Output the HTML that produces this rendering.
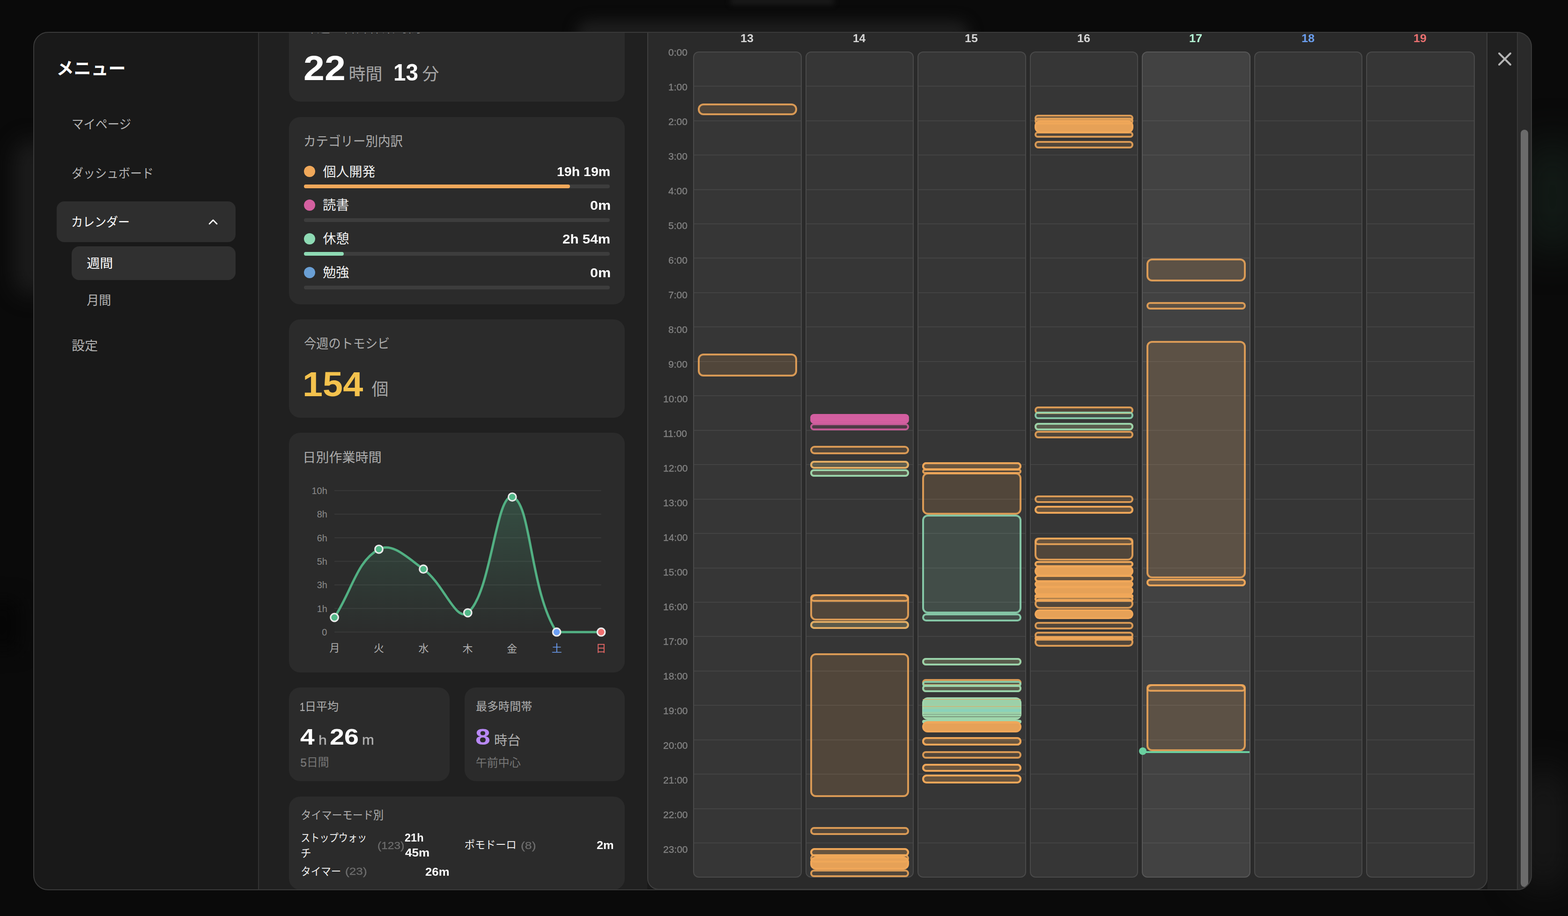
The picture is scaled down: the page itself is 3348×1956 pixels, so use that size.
<!DOCTYPE html>
<html lang="ja"><head><meta charset="utf-8"><title>Weekly calendar</title>
<style>
*{box-sizing:border-box;margin:0;padding:0}
html,body{width:3348px;height:1956px;overflow:hidden;background:#0a0a0a}
body{position:relative;font-family:"Liberation Sans",sans-serif}
.b,.t,.jp,.e{position:absolute}
.t{line-height:1;white-space:nowrap;transform-origin:0 0;display:block}
.jp{display:block;overflow:visible}
.jp text{font-family:"Liberation Sans","Noto Sans CJK JP",sans-serif}
.e{border-style:solid;border-width:4px;border-radius:12px}
#modal{position:absolute;left:71px;top:68px;width:3200px;height:1833px;border-radius:32px;overflow:hidden;background:#191919}
#modal>.in{position:absolute;left:-71px;top:-68px;width:3348px;height:1956px}
#frame{position:absolute;left:71px;top:68px;width:3200px;height:1833px;border-radius:32px;border:2px solid #3a3a3a;pointer-events:none}
.card{position:absolute;background:#2b2b2b;border-radius:24px}
.col{position:absolute;top:110px;width:231.5px;height:1764px;border:2px solid #4a4a4a;border-radius:12px;background:#363636}
.col.today{background:#424242;border-color:#585858}
.hl{position:absolute;left:0;right:0;height:2px;background:#434343}
.today .hl{background:#4e4e4e}
</style></head><body>

<div class="b" style="left:1230px;top:44px;width:840px;height:60px;background:#1d1d1d;filter:blur(14px);border-radius:30px"></div>
<div class="b" style="left:1560px;top:-6px;width:220px;height:16px;background:#1a1a1a;filter:blur(6px)"></div>
<div class="b" style="left:30px;top:300px;width:80px;height:330px;background:#1b1b1b;filter:blur(22px);border-radius:40px"></div>
<div class="b" style="left:-30px;top:1280px;width:70px;height:110px;background:#050505;filter:blur(20px)"></div>
<div class="b" style="left:3250px;top:300px;width:130px;height:240px;background:#121a16;filter:blur(40px);border-radius:60px"></div>
<div class="b" style="left:3240px;top:1640px;width:110px;height:260px;background:#181818;filter:blur(36px);border-radius:60px"></div>
<div id="modal"><div class="in">
<div class="b" style="left:553px;top:60px;width:829px;height:1850px;background:#202020"></div>
<div class="b" style="left:551px;top:60px;width:2px;height:1850px;background:#323232"></div>
<div class="b" style="left:3176px;top:60px;width:64px;height:1850px;background:#202020"></div>
<div class="b" style="left:3239px;top:60px;width:40px;height:1850px;background:#2a2a2a;border-left:2px solid #383838"></div>
<div class="b" style="left:3247px;top:277px;width:16px;height:1617px;background:#6b6b6b;border-radius:8px"></div>
<svg class="jp" style="left:119.7px;top:126.6px;" width="149.3" height="37.5" viewBox="-0.4 -33.5 149.3 37.5"><text x="0" y="0" font-size="37" font-weight="700" fill="#ffffff" textLength="148" lengthAdjust="spacingAndGlyphs">メニュー</text></svg>
<svg class="jp" style="left:151.5px;top:250.7px;" width="129.2" height="28" viewBox="-0.9 -24.5 129.2 28"><text x="0" y="0" font-size="27" fill="#b4b4b4" textLength="127" lengthAdjust="spacingAndGlyphs">マイページ</text></svg>
<svg class="jp" style="left:151.5px;top:353.7px;" width="176.9" height="30.3" viewBox="-1 -25.9 176.9 30.3"><text x="0" y="0" font-size="27" fill="#b4b4b4" textLength="175" lengthAdjust="spacingAndGlyphs">ダッシュボード</text></svg>
<div class="b" style="left:121px;top:430px;width:382px;height:87px;background:#2e2e2e;border-radius:16px"></div>
<svg class="jp" style="left:152px;top:457.5px;" width="126" height="30.1" viewBox="0.1 -25.9 126 30.1"><text x="0" y="0" font-size="27" fill="#ffffff" textLength="125" lengthAdjust="spacingAndGlyphs">カレンダー</text></svg>
<svg class="jp" style="left:441px;top:462px" width="28" height="24" viewBox="0 0 28 24"><path d="M6.1 16 L14.05 8.05 L22 16" fill="none" stroke="#ffffff" stroke-width="2.8" stroke-linecap="round" stroke-linejoin="round"/></svg>
<div class="b" style="left:153px;top:526px;width:350px;height:72px;background:#303030;border-radius:16px"></div>
<svg class="jp" style="left:183.5px;top:546.8px;" width="57.6" height="29.4" viewBox="-1.2 -25 57.6 29.4"><text x="0" y="0" font-size="27" fill="#ffffff" textLength="56" lengthAdjust="spacingAndGlyphs">週間</text></svg>
<svg class="jp" style="left:184px;top:627.1px;" width="54.3" height="28.9" viewBox="-1.3 -24.5 54.3 28.9"><text x="0" y="0" font-size="27" fill="#b4b4b4" textLength="52" lengthAdjust="spacingAndGlyphs">月間</text></svg>
<svg class="jp" style="left:152px;top:721.6px;" width="57.7" height="30.1" viewBox="-1 -25.6 57.7 30.1"><text x="0" y="0" font-size="27.5" fill="#b4b4b4" textLength="56" lengthAdjust="spacingAndGlyphs">設定</text></svg>
<div class="card" style="left:617px;top:10px;width:717px;height:207px"></div>
<svg class="jp" style="left:648px;top:42.8px;" width="251.9" height="30.2" viewBox="-1.2 -25.8 251.9 30.2"><text x="0" y="0" font-size="28" fill="#a8a8a8" textLength="250" lengthAdjust="spacingAndGlyphs">今週の合計作業時間</text></svg>
<span class="t " style="left:648.2px;top:108.8px;font-size:73.5px;color:#ffffff;font-weight:700;transform:scaleX(1.098);">22</span>
<svg class="jp" style="left:744.7px;top:138.8px;" width="72.3" height="37.5" viewBox="0.5 -32.4 72.3 37.5"><text x="0" y="0" font-size="36" fill="#a6a6a6" textLength="72" lengthAdjust="spacingAndGlyphs">時間</text></svg>
<span class="t " style="left:839.5px;top:129.6px;font-size:50.5px;color:#ffffff;font-weight:700;transform:scaleX(0.944);">13</span>
<svg class="jp" style="left:899.7px;top:139.3px;" width="38.7" height="37.1" viewBox="-1.4 -31.8 38.7 37.1"><text x="0" y="0" font-size="36" fill="#a6a6a6">分</text></svg>
<div class="card" style="left:617px;top:250px;width:717px;height:400px"></div>
<svg class="jp" style="left:648px;top:285.6px;" width="213.5" height="30.5" viewBox="0.1 -26.1 213.5 30.5"><text x="0" y="0" font-size="28" fill="#adadad" textLength="212" lengthAdjust="spacingAndGlyphs">カテゴリー別内訳</text></svg>
<div class="b" style="left:649px;top:354px;width:24px;height:24px;background:#f0a85a;border-radius:50%"></div>
<svg class="jp" style="left:687.5px;top:350.5px;" width="115" height="30.1" viewBox="-1.6 -25.6 115 30.1"><text x="0" y="0" font-size="28" fill="#f2f2f2" textLength="112" lengthAdjust="spacingAndGlyphs">個人開発</text></svg>
<span class="t " style="left:1189.2px;top:352.6px;font-size:27.4px;color:#ffffff;font-weight:700;transform:scaleX(1.042);">19h 19m</span>
<div class="b" style="left:649px;top:394px;width:653px;height:8px;background:#3d3d3d;border-radius:4px"></div>
<div class="b" style="left:649px;top:394px;width:568px;height:8px;background:#f0a85a;border-radius:4px"></div>
<div class="b" style="left:649px;top:426px;width:24px;height:24px;background:#d460a0;border-radius:50%"></div>
<svg class="jp" style="left:687.5px;top:422.4px;" width="58.5" height="30.2" viewBox="-1 -25.7 58.5 30.2"><text x="0" y="0" font-size="28" fill="#f2f2f2" textLength="56.5" lengthAdjust="spacingAndGlyphs">読書</text></svg>
<span class="t " style="left:1259.5px;top:424.6px;font-size:27.4px;color:#ffffff;font-weight:700;transform:scaleX(1.114);">0m</span>
<div class="b" style="left:649px;top:466px;width:653px;height:8px;background:#3d3d3d;border-radius:4px"></div>
<div class="b" style="left:649px;top:498px;width:24px;height:24px;background:#8edab4;border-radius:50%"></div>
<svg class="jp" style="left:687.5px;top:494.4px;" width="58.5" height="30.2" viewBox="-1.6 -25.8 58.5 30.2"><text x="0" y="0" font-size="28" fill="#f2f2f2" textLength="56" lengthAdjust="spacingAndGlyphs">休憩</text></svg>
<span class="t " style="left:1201.4px;top:496.6px;font-size:27.4px;color:#ffffff;font-weight:700;transform:scaleX(1.082);">2h 54m</span>
<div class="b" style="left:649px;top:538px;width:653px;height:8px;background:#3d3d3d;border-radius:4px"></div>
<div class="b" style="left:649px;top:538px;width:85px;height:8px;background:#8edab4;border-radius:4px"></div>
<div class="b" style="left:649px;top:570px;width:24px;height:24px;background:#6a9fd4;border-radius:50%"></div>
<svg class="jp" style="left:687.5px;top:566.4px;" width="58.5" height="30.3" viewBox="-1.3 -25.7 58.5 30.3"><text x="0" y="0" font-size="28" fill="#f2f2f2" textLength="56" lengthAdjust="spacingAndGlyphs">勉強</text></svg>
<span class="t " style="left:1259.5px;top:568.6px;font-size:27.4px;color:#ffffff;font-weight:700;transform:scaleX(1.114);">0m</span>
<div class="b" style="left:649px;top:610px;width:653px;height:8px;background:#3d3d3d;border-radius:4px"></div>
<div class="card" style="left:617px;top:682px;width:717px;height:210px"></div>
<svg class="jp" style="left:648px;top:718.2px;" width="184.7" height="30.2" viewBox="-1.2 -25.8 184.7 30.2"><text x="0" y="0" font-size="28" fill="#adadad" textLength="183" lengthAdjust="spacingAndGlyphs">今週のトモシビ</text></svg>
<span class="t " style="left:646.1px;top:783.8px;font-size:74.5px;color:#f4c24d;font-weight:700;transform:scaleX(1.040);">154</span>
<svg class="jp" style="left:792.2px;top:812.1px;" width="37.1" height="37.3" viewBox="-1.5 -32.2 37.1 37.3"><text x="0" y="0" font-size="36" fill="#a6a6a6">個</text></svg>
<div class="card" style="left:617px;top:924px;width:717px;height:512px"></div>
<svg class="jp" style="left:648.6px;top:960.5px;" width="166.4" height="30.1" viewBox="2.7 -25.7 166.4 30.1"><text x="0" y="0" font-size="28" fill="#adadad" textLength="168.5" lengthAdjust="spacingAndGlyphs">日別作業時間</text></svg>
<svg class="jp" style="left:0;top:0" width="3348" height="1956" viewBox="0 0 3348 1956"><defs><linearGradient id="ga" x1="0" y1="1047.6" x2="0" y2="1349.7" gradientUnits="userSpaceOnUse"><stop offset="0" stop-color="#52b788" stop-opacity="0.26"/><stop offset="1" stop-color="#52b788" stop-opacity="0.01"/></linearGradient></defs><rect x="714.1" y="1046.6" width="569.5" height="2" fill="#393939"/><rect x="714.1" y="1096.9" width="569.5" height="2" fill="#393939"/><rect x="714.1" y="1147.3" width="569.5" height="2" fill="#393939"/><rect x="714.1" y="1197.7" width="569.5" height="2" fill="#393939"/><rect x="714.1" y="1248" width="569.5" height="2" fill="#393939"/><rect x="714.1" y="1298.3" width="569.5" height="2" fill="#393939"/><rect x="714.1" y="1348.7" width="569.5" height="2" fill="#393939"/><path d="M714.1 1318.5 C752.1 1260.2 761.5 1198.7 809 1172.8 C837.4 1157.3 870.7 1191.4 904 1215.2 C946.6 1245.7 973.4 1329.2 998.8 1308.6 C1049.3 1267.6 1058.4 1053.6 1093.8 1061.3 C1134.3 1070.1 1130.8 1261.8 1188.6 1349.7 C1206.7 1349.7 1245.6 1349.7 1283.6 1349.7 L1283.6 1349.7 L714.1 1349.7 Z" fill="url(#ga)"/><path d="M714.1 1318.5 C752.1 1260.2 761.5 1198.7 809 1172.8 C837.4 1157.3 870.7 1191.4 904 1215.2 C946.6 1245.7 973.4 1329.2 998.8 1308.6 C1049.3 1267.6 1058.4 1053.6 1093.8 1061.3 C1134.3 1070.1 1130.8 1261.8 1188.6 1349.7 C1206.7 1349.7 1245.6 1349.7 1283.6 1349.7" fill="none" stroke="#52b083" stroke-width="5" stroke-linecap="round" stroke-linejoin="round"/><circle cx="714.1" cy="1318.5" r="8.3" fill="#52b788" stroke="#ebebeb" stroke-width="3.2"/><circle cx="809" cy="1172.8" r="8.3" fill="#52b788" stroke="#ebebeb" stroke-width="3.2"/><circle cx="904" cy="1215.2" r="8.3" fill="#52b788" stroke="#ebebeb" stroke-width="3.2"/><circle cx="998.8" cy="1308.6" r="8.3" fill="#52b788" stroke="#ebebeb" stroke-width="3.2"/><circle cx="1093.8" cy="1061.3" r="8.3" fill="#52b788" stroke="#ebebeb" stroke-width="3.2"/><circle cx="1188.6" cy="1349.7" r="8.3" fill="#6b9ff5" stroke="#ebebeb" stroke-width="3.2"/><circle cx="1283.6" cy="1349.7" r="8.3" fill="#f07070" stroke="#ebebeb" stroke-width="3.2"/></svg>
<span class="t " style="left:665.5px;top:1037.8px;font-size:20px;color:#8a8a8a;">10h</span>
<span class="t " style="left:676.7px;top:1088.1px;font-size:20px;color:#8a8a8a;">8h</span>
<span class="t " style="left:676.7px;top:1138.5px;font-size:20px;color:#8a8a8a;">6h</span>
<span class="t " style="left:676.7px;top:1188.9px;font-size:20px;color:#8a8a8a;">5h</span>
<span class="t " style="left:676.7px;top:1239.2px;font-size:20px;color:#8a8a8a;">3h</span>
<span class="t " style="left:676.7px;top:1289.5px;font-size:20px;color:#8a8a8a;">1h</span>
<span class="t " style="left:687.3px;top:1339.9px;font-size:20px;color:#8a8a8a;">0</span>
<svg class="jp" style="left:703.3px;top:1372.3px;" width="21.7" height="23.3" viewBox="-1.4 -19.5 21.7 23.3"><text x="-1" y="0" font-size="22" fill="#b0b0b0">月</text></svg>
<svg class="jp" style="left:796.9px;top:1371.9px;" width="24.2" height="24.1" viewBox="-1.1 -20.3 24.2 24.1"><text x="0" y="0" font-size="22" fill="#b0b0b0">火</text></svg>
<svg class="jp" style="left:891.5px;top:1371.8px;" width="24.9" height="24.4" viewBox="-1.5 -20.5 24.9 24.4"><text x="0" y="0" font-size="22" fill="#b0b0b0">水</text></svg>
<svg class="jp" style="left:986.3px;top:1371.8px;" width="25" height="24.4" viewBox="-1.5 -20.6 25 24.4"><text x="0" y="0" font-size="22" fill="#b0b0b0">木</text></svg>
<svg class="jp" style="left:1081.4px;top:1372.1px;" width="24.7" height="23.8" viewBox="-1.3 -20.6 24.7 23.8"><text x="0" y="0" font-size="22" fill="#b0b0b0">金</text></svg>
<svg class="jp" style="left:1176.7px;top:1372.3px;" width="23.9" height="23.4" viewBox="-0.9 -20.5 23.9 23.4"><text x="0" y="0" font-size="22" fill="#6b9be8">土</text></svg>
<svg class="jp" style="left:1274.2px;top:1372.6px;" width="18.8" height="22.8" viewBox="1.7 -19.2 18.8 22.8"><text x="0" y="0" font-size="22" fill="#e06868">日</text></svg>
<div class="card" style="left:617px;top:1468px;width:343px;height:200px"></div>
<div class="card" style="left:992px;top:1468px;width:342px;height:200px"></div>
<span class="t " style="left:640.1px;top:1497.7px;font-size:24px;color:#b0b0b0;-webkit-text-stroke:0.4px #b0b0b0;transform:scaleX(0.850);">1</span>
<svg class="jp" style="left:652.5px;top:1495.2px;" width="70.3" height="26.3" viewBox="2 -22.3 70.3 26.3"><text x="0" y="0" font-size="24" fill="#b0b0b0" textLength="72" lengthAdjust="spacingAndGlyphs">日平均</text></svg>
<span class="t " style="left:640.9px;top:1550px;font-size:48px;color:#ffffff;font-weight:700;transform:scaleX(1.147);">4</span>
<span class="t " style="left:679.5px;top:1566px;font-size:28.5px;color:#b0b0b0;-webkit-text-stroke:0.5px #b0b0b0;transform:scaleX(1.131);">h</span>
<span class="t " style="left:704.1px;top:1550px;font-size:48px;color:#ffffff;font-weight:700;transform:scaleX(1.160);">26</span>
<span class="t " style="left:772.9px;top:1565px;font-size:29.5px;color:#b0b0b0;-webkit-text-stroke:0.5px #b0b0b0;transform:scaleX(1.050);">m</span>
<span class="t " style="left:641.2px;top:1617.3px;font-size:24.5px;color:#777777;-webkit-text-stroke:0.4px #777777;">5</span>
<svg class="jp" style="left:656.7px;top:1615.2px;" width="45.6" height="25.3" viewBox="2 -21.3 45.6 25.3"><text x="0" y="0" font-size="24" fill="#777777" textLength="47.5" lengthAdjust="spacingAndGlyphs">日間</text></svg>
<svg class="jp" style="left:1014.7px;top:1495.3px;" width="122.3" height="26.4" viewBox="-0.9 -22.3 122.3 26.4"><text x="0" y="0" font-size="24" fill="#b0b0b0" textLength="120.5" lengthAdjust="spacingAndGlyphs">最多時間帯</text></svg>
<span class="t " style="left:1015.2px;top:1549.2px;font-size:48.5px;color:#b888f6;font-weight:700;transform:scaleX(1.182);">8</span>
<svg class="jp" style="left:1054.7px;top:1564.9px;" width="57.3" height="30.2" viewBox="0 -25.8 57.3 30.2"><text x="0" y="0" font-size="28" fill="#b0b0b0" textLength="56.5" lengthAdjust="spacingAndGlyphs">時台</text></svg>
<svg class="jp" style="left:1014.7px;top:1614.8px;" width="97.3" height="26.4" viewBox="-0.8 -22.4 97.3 26.4"><text x="0" y="0" font-size="24" fill="#777777" textLength="96" lengthAdjust="spacingAndGlyphs">午前中心</text></svg>
<div class="card" style="left:617px;top:1701px;width:717px;height:198.5px"></div>
<svg class="jp" style="left:640.5px;top:1726.8px;" width="179" height="25.9" viewBox="-1.2 -21.8 179 25.9"><text x="0" y="0" font-size="24" fill="#b0b0b0" textLength="177" lengthAdjust="spacingAndGlyphs">タイマーモード別</text></svg>
<svg class="jp" style="left:640.5px;top:1774.8px;" width="143.2" height="26.2" viewBox="-1.1 -22.2 143.2 26.2"><text x="0" y="0" font-size="23" fill="#f2f2f2" textLength="141" lengthAdjust="spacingAndGlyphs">ストップウォッ</text></svg>
<svg class="jp" style="left:640.5px;top:1808.5px;" width="24" height="23.9" viewBox="-0.8 -20.7 24 23.9"><text x="0" y="0" font-size="23" fill="#f2f2f2">チ</text></svg>
<span class="t " style="left:805.5px;top:1795.6px;font-size:21.5px;color:#6e6e6e;-webkit-text-stroke:0.3px #6e6e6e;transform:scaleX(1.143);">(123)</span>
<span class="t " style="left:864.2px;top:1777px;font-size:24.2px;color:#ffffff;font-weight:700;transform:scaleX(0.973);">21h</span>
<span class="t " style="left:864.6px;top:1809.2px;font-size:24.2px;color:#ffffff;font-weight:700;transform:scaleX(1.080);">45m</span>
<svg class="jp" style="left:990.5px;top:1790.4px;" width="112.8" height="25.7" viewBox="-0.7 -22.5 112.8 25.7"><text x="0" y="0" font-size="23" fill="#f2f2f2" textLength="111" lengthAdjust="spacingAndGlyphs">ポモドーロ</text></svg>
<span class="t " style="left:1111.7px;top:1795.6px;font-size:21.5px;color:#6e6e6e;-webkit-text-stroke:0.3px #6e6e6e;transform:scaleX(1.237);">(8)</span>
<span class="t " style="left:1274.1px;top:1793.3px;font-size:24.2px;color:#ffffff;font-weight:700;transform:scaleX(1.048);">2m</span>
<svg class="jp" style="left:640.5px;top:1847.4px;" width="87.8" height="25.1" viewBox="-1.2 -21.8 87.8 25.1"><text x="0" y="0" font-size="23" fill="#f2f2f2" textLength="86" lengthAdjust="spacingAndGlyphs">タイマー</text></svg>
<span class="t " style="left:736.7px;top:1850.7px;font-size:21.5px;color:#6e6e6e;-webkit-text-stroke:0.3px #6e6e6e;transform:scaleX(1.220);">(23)</span>
<span class="t " style="left:908.3px;top:1849.7px;font-size:24.2px;color:#ffffff;font-weight:700;transform:scaleX(1.065);">26m</span>
<div class="b" style="left:1382px;top:30px;width:1794px;height:1870px;background:#2a2a2a;border:2px solid #3f3f3f;border-radius:24px"></div>
<span class="t " style="left:1427.2px;top:101.7px;font-size:20px;color:#838383;-webkit-text-stroke:0.35px #838383;transform:scaleX(1.050);">0:00</span>
<span class="t " style="left:1427.2px;top:175.7px;font-size:20px;color:#838383;-webkit-text-stroke:0.35px #838383;transform:scaleX(1.050);">1:00</span>
<span class="t " style="left:1427.2px;top:249.7px;font-size:20px;color:#838383;-webkit-text-stroke:0.35px #838383;transform:scaleX(1.050);">2:00</span>
<span class="t " style="left:1427.2px;top:323.7px;font-size:20px;color:#838383;-webkit-text-stroke:0.35px #838383;transform:scaleX(1.050);">3:00</span>
<span class="t " style="left:1427.2px;top:397.7px;font-size:20px;color:#838383;-webkit-text-stroke:0.35px #838383;transform:scaleX(1.050);">4:00</span>
<span class="t " style="left:1427.2px;top:471.7px;font-size:20px;color:#838383;-webkit-text-stroke:0.35px #838383;transform:scaleX(1.050);">5:00</span>
<span class="t " style="left:1427.2px;top:545.7px;font-size:20px;color:#838383;-webkit-text-stroke:0.35px #838383;transform:scaleX(1.050);">6:00</span>
<span class="t " style="left:1427.2px;top:619.7px;font-size:20px;color:#838383;-webkit-text-stroke:0.35px #838383;transform:scaleX(1.050);">7:00</span>
<span class="t " style="left:1427.2px;top:693.7px;font-size:20px;color:#838383;-webkit-text-stroke:0.35px #838383;transform:scaleX(1.050);">8:00</span>
<span class="t " style="left:1427.2px;top:767.7px;font-size:20px;color:#838383;-webkit-text-stroke:0.35px #838383;transform:scaleX(1.050);">9:00</span>
<span class="t " style="left:1415.6px;top:841.7px;font-size:20px;color:#838383;-webkit-text-stroke:0.35px #838383;transform:scaleX(1.050);">10:00</span>
<span class="t " style="left:1415.6px;top:915.7px;font-size:20px;color:#838383;-webkit-text-stroke:0.35px #838383;transform:scaleX(1.050);">11:00</span>
<span class="t " style="left:1415.6px;top:989.7px;font-size:20px;color:#838383;-webkit-text-stroke:0.35px #838383;transform:scaleX(1.050);">12:00</span>
<span class="t " style="left:1415.6px;top:1063.7px;font-size:20px;color:#838383;-webkit-text-stroke:0.35px #838383;transform:scaleX(1.050);">13:00</span>
<span class="t " style="left:1415.6px;top:1137.7px;font-size:20px;color:#838383;-webkit-text-stroke:0.35px #838383;transform:scaleX(1.050);">14:00</span>
<span class="t " style="left:1415.6px;top:1211.7px;font-size:20px;color:#838383;-webkit-text-stroke:0.35px #838383;transform:scaleX(1.050);">15:00</span>
<span class="t " style="left:1415.6px;top:1285.7px;font-size:20px;color:#838383;-webkit-text-stroke:0.35px #838383;transform:scaleX(1.050);">16:00</span>
<span class="t " style="left:1415.6px;top:1359.7px;font-size:20px;color:#838383;-webkit-text-stroke:0.35px #838383;transform:scaleX(1.050);">17:00</span>
<span class="t " style="left:1415.6px;top:1433.7px;font-size:20px;color:#838383;-webkit-text-stroke:0.35px #838383;transform:scaleX(1.050);">18:00</span>
<span class="t " style="left:1415.6px;top:1507.7px;font-size:20px;color:#838383;-webkit-text-stroke:0.35px #838383;transform:scaleX(1.050);">19:00</span>
<span class="t " style="left:1415.6px;top:1581.7px;font-size:20px;color:#838383;-webkit-text-stroke:0.35px #838383;transform:scaleX(1.050);">20:00</span>
<span class="t " style="left:1415.6px;top:1655.7px;font-size:20px;color:#838383;-webkit-text-stroke:0.35px #838383;transform:scaleX(1.050);">21:00</span>
<span class="t " style="left:1415.6px;top:1729.7px;font-size:20px;color:#838383;-webkit-text-stroke:0.35px #838383;transform:scaleX(1.050);">22:00</span>
<span class="t " style="left:1415.6px;top:1803.7px;font-size:20px;color:#838383;-webkit-text-stroke:0.35px #838383;transform:scaleX(1.050);">23:00</span>
<span class="t " style="left:1581.4px;top:70.4px;font-size:24px;color:#d6d6d6;font-weight:700;transform:scaleX(1.049);">13</span>
<span class="t " style="left:1821px;top:70.4px;font-size:24px;color:#d6d6d6;font-weight:700;transform:scaleX(1.018);">14</span>
<span class="t " style="left:2060.4px;top:70.4px;font-size:24px;color:#d6d6d6;font-weight:700;transform:scaleX(1.040);">15</span>
<span class="t " style="left:2299.9px;top:70.4px;font-size:24px;color:#d6d6d6;font-weight:700;transform:scaleX(1.049);">16</span>
<span class="t " style="left:2539.4px;top:70.4px;font-size:24px;color:#b5f5d5;font-weight:700;transform:scaleX(1.057);">17</span>
<span class="t " style="left:2778.9px;top:70.4px;font-size:24px;color:#6b9ff0;font-weight:700;transform:scaleX(1.043);">18</span>
<span class="t " style="left:3018.4px;top:70.4px;font-size:24px;color:#ea7070;font-weight:700;transform:scaleX(1.050);">19</span>
<div class="col" style="left:1480px"><div class="hl" style="top:71.2px"></div><div class="hl" style="top:144.6px"></div><div class="hl" style="top:218.1px"></div><div class="hl" style="top:291.5px"></div><div class="hl" style="top:364.9px"></div><div class="hl" style="top:438.4px"></div><div class="hl" style="top:511.9px"></div><div class="hl" style="top:585.3px"></div><div class="hl" style="top:658.8px"></div><div class="hl" style="top:732.2px"></div><div class="hl" style="top:805.7px"></div><div class="hl" style="top:879.1px"></div><div class="hl" style="top:952.5px"></div><div class="hl" style="top:1026px"></div><div class="hl" style="top:1099.5px"></div><div class="hl" style="top:1172.9px"></div><div class="hl" style="top:1246.4px"></div><div class="hl" style="top:1319.8px"></div><div class="hl" style="top:1393.2px"></div><div class="hl" style="top:1466.7px"></div><div class="hl" style="top:1540.2px"></div><div class="hl" style="top:1613.6px"></div><div class="hl" style="top:1687.1px"></div><div class="e" style="left:8px;right:8px;top:109px;height:25px;border-color:rgba(240,168,90,0.85);background:rgba(240,168,90,0.15);border-radius:12px"></div><div class="e" style="left:8px;right:8px;top:642.6px;height:49.4px;border-color:rgba(240,168,90,0.85);background:rgba(240,168,90,0.15);border-radius:12px"></div></div>
<div class="col" style="left:1719.5px"><div class="hl" style="top:71.2px"></div><div class="hl" style="top:144.6px"></div><div class="hl" style="top:218.1px"></div><div class="hl" style="top:291.5px"></div><div class="hl" style="top:364.9px"></div><div class="hl" style="top:438.4px"></div><div class="hl" style="top:511.9px"></div><div class="hl" style="top:585.3px"></div><div class="hl" style="top:658.8px"></div><div class="hl" style="top:732.2px"></div><div class="hl" style="top:805.7px"></div><div class="hl" style="top:879.1px"></div><div class="hl" style="top:952.5px"></div><div class="hl" style="top:1026px"></div><div class="hl" style="top:1099.5px"></div><div class="hl" style="top:1172.9px"></div><div class="hl" style="top:1246.4px"></div><div class="hl" style="top:1319.8px"></div><div class="hl" style="top:1393.2px"></div><div class="hl" style="top:1466.7px"></div><div class="hl" style="top:1540.2px"></div><div class="hl" style="top:1613.6px"></div><div class="hl" style="top:1687.1px"></div><div class="e" style="left:8px;right:8px;top:771.7px;height:16.3px;border-color:rgba(212,95,160,0.95);background:rgba(212,95,160,0.95);border-radius:8.1px"></div><div class="e" style="left:8px;right:8px;top:776px;height:17px;border-color:rgba(212,95,160,0.95);background:rgba(212,95,160,0.95);border-radius:8.5px"></div><div class="e" style="left:8px;right:8px;top:792.4px;height:14.8px;border-color:rgba(212,95,160,0.85);background:rgba(212,95,160,0.15);border-radius:7.4px"></div><div class="e" style="left:8px;right:8px;top:839.8px;height:18.2px;border-color:rgba(240,168,90,0.85);background:rgba(240,168,90,0.15);border-radius:9.1px"></div><div class="e" style="left:8px;right:8px;top:872.4px;height:17px;border-color:rgba(143,218,181,0.85);background:rgba(143,218,181,0.15);border-radius:8.5px"></div><div class="e" style="left:8px;right:8px;top:872.4px;height:17px;border-color:rgba(240,168,90,0.85);background:rgba(240,168,90,0.15);border-radius:8.5px"></div><div class="e" style="left:8px;right:8px;top:890px;height:16.3px;border-color:rgba(240,168,90,0.85);background:rgba(240,168,90,0.15);border-radius:8.1px"></div><div class="e" style="left:8px;right:8px;top:890px;height:16.3px;border-color:rgba(143,218,181,0.85);background:rgba(143,218,181,0.15);border-radius:8.1px"></div><div class="e" style="left:8px;right:8px;top:1157.1px;height:56.1px;border-color:rgba(240,168,90,0.85);background:rgba(240,168,90,0.15);border-radius:12px"></div><div class="e" style="left:8px;right:8px;top:1157.1px;height:15.7px;border-color:rgba(240,168,90,0.85);background:rgba(240,168,90,0.15);border-radius:7.9px"></div><div class="e" style="left:8px;right:8px;top:1214px;height:17px;border-color:rgba(143,218,181,0.85);background:rgba(143,218,181,0.15);border-radius:8.5px"></div><div class="e" style="left:8px;right:8px;top:1214px;height:17px;border-color:rgba(240,168,90,0.85);background:rgba(240,168,90,0.15);border-radius:8.5px"></div><div class="e" style="left:8px;right:8px;top:1282.9px;height:306.9px;border-color:rgba(240,168,90,0.85);background:rgba(240,168,90,0.15);border-radius:12px"></div><div class="e" style="left:8px;right:8px;top:1654px;height:16.5px;border-color:rgba(240,168,90,0.85);background:rgba(240,168,90,0.15);border-radius:8.2px"></div><div class="e" style="left:8px;right:8px;top:1699px;height:18px;border-color:rgba(240,168,90,0.85);background:rgba(240,168,90,0.15);border-radius:9px"></div><div class="e" style="left:8px;right:8px;top:1699px;height:18px;border-color:rgba(240,168,90,0.85);background:rgba(240,168,90,0.15);border-radius:9px"></div><div class="e" style="left:8px;right:8px;top:1717px;height:28px;border-color:rgba(240,168,90,0.95);background:rgba(240,168,90,0.95);border-radius:12px"></div><div class="e" style="left:8px;right:8px;top:1712px;height:18px;border-color:rgba(240,168,90,0.85);background:rgba(240,168,90,0.15);border-radius:9px"></div><div class="e" style="left:8px;right:8px;top:1744.7px;height:16.3px;border-color:rgba(240,168,90,0.85);background:rgba(240,168,90,0.15);border-radius:8.1px"></div></div>
<div class="col" style="left:1959px"><div class="hl" style="top:71.2px"></div><div class="hl" style="top:144.6px"></div><div class="hl" style="top:218.1px"></div><div class="hl" style="top:291.5px"></div><div class="hl" style="top:364.9px"></div><div class="hl" style="top:438.4px"></div><div class="hl" style="top:511.9px"></div><div class="hl" style="top:585.3px"></div><div class="hl" style="top:658.8px"></div><div class="hl" style="top:732.2px"></div><div class="hl" style="top:805.7px"></div><div class="hl" style="top:879.1px"></div><div class="hl" style="top:952.5px"></div><div class="hl" style="top:1026px"></div><div class="hl" style="top:1099.5px"></div><div class="hl" style="top:1172.9px"></div><div class="hl" style="top:1246.4px"></div><div class="hl" style="top:1319.8px"></div><div class="hl" style="top:1393.2px"></div><div class="hl" style="top:1466.7px"></div><div class="hl" style="top:1540.2px"></div><div class="hl" style="top:1613.6px"></div><div class="hl" style="top:1687.1px"></div><div class="e" style="left:8px;right:8px;top:875px;height:17px;border-color:rgba(240,168,90,0.85);background:rgba(240,168,90,0.15);border-radius:8.5px"></div><div class="e" style="left:8px;right:8px;top:875px;height:17px;border-color:rgba(240,168,90,0.85);background:rgba(240,168,90,0.15);border-radius:8.5px"></div><div class="e" style="left:8px;right:8px;top:889px;height:11px;border-color:rgba(240,168,90,0.85);background:rgba(240,168,90,0.15);border-radius:5.5px"></div><div class="e" style="left:8px;right:8px;top:896.6px;height:90.8px;border-color:rgba(240,168,90,0.85);background:rgba(240,168,90,0.15);border-radius:12px"></div><div class="e" style="left:8px;right:8px;top:987px;height:211.3px;border-color:rgba(143,218,181,0.85);background:rgba(143,218,181,0.15);border-radius:12px"></div><div class="e" style="left:8px;right:8px;top:1198.3px;height:16.9px;border-color:rgba(143,218,181,0.85);background:rgba(143,218,181,0.15);border-radius:8.5px"></div><div class="e" style="left:8px;right:8px;top:1293.1px;height:15.9px;border-color:rgba(240,168,90,0.85);background:rgba(240,168,90,0.15);border-radius:8px"></div><div class="e" style="left:8px;right:8px;top:1293.1px;height:15.9px;border-color:rgba(143,218,181,0.85);background:rgba(143,218,181,0.15);border-radius:8px"></div><div class="e" style="left:8px;right:8px;top:1338px;height:15px;border-color:rgba(240,168,90,0.85);background:rgba(240,168,90,0.15);border-radius:7.5px"></div><div class="e" style="left:8px;right:8px;top:1341.5px;height:13.5px;border-color:rgba(143,218,181,0.85);background:rgba(143,218,181,0.15);border-radius:6.8px"></div><div class="e" style="left:8px;right:8px;top:1350px;height:16px;border-color:rgba(240,168,90,0.85);background:rgba(240,168,90,0.15);border-radius:8px"></div><div class="e" style="left:8px;right:8px;top:1350px;height:16px;border-color:rgba(143,218,181,0.85);background:rgba(143,218,181,0.15);border-radius:8px"></div><div class="e" style="left:8px;right:8px;top:1377px;height:47.5px;border-color:rgba(160,214,172,0.97);background:rgba(160,214,172,0.97);border-radius:12px"></div><div class="e" style="left:8px;right:8px;top:1424.5px;height:8.5px;border-color:rgba(160,214,172,0.97);background:rgba(160,214,172,0.97);border-radius:4.2px"></div><div class="e" style="left:8px;right:8px;top:1428px;height:24px;border-color:rgba(240,168,90,0.95);background:rgba(240,168,90,0.95);border-radius:12px"></div><div class="b" style="left:9px;right:9px;top:1380.6px;height:1.6px;background:#e6a862;border-radius:2px"></div><div class="b" style="left:9px;right:9px;top:1395.8px;height:1.6px;background:#e6a862;border-radius:2px"></div><div class="b" style="left:9px;right:9px;top:1401.6px;height:6.1px;background:#8ad2ba;border-radius:2px"></div><div class="b" style="left:9px;right:9px;top:1412.6px;height:1.4px;background:#7a9a84;border-radius:2px"></div><div class="b" style="left:9px;right:9px;top:1417.6px;height:1.4px;background:#5f6f5c;border-radius:2px"></div><div class="e" style="left:8px;right:8px;top:1462.2px;height:17.5px;border-color:rgba(240,168,90,0.85);background:rgba(240,168,90,0.15);border-radius:8.8px"></div><div class="e" style="left:8px;right:8px;top:1462.2px;height:17.5px;border-color:rgba(240,168,90,0.85);background:rgba(240,168,90,0.15);border-radius:8.8px"></div><div class="e" style="left:8px;right:8px;top:1492px;height:16px;border-color:rgba(240,168,90,0.85);background:rgba(240,168,90,0.15);border-radius:8px"></div><div class="e" style="left:8px;right:8px;top:1518.8px;height:17.4px;border-color:rgba(240,168,90,0.85);background:rgba(240,168,90,0.15);border-radius:8.7px"></div><div class="e" style="left:8px;right:8px;top:1518.8px;height:17.4px;border-color:rgba(240,168,90,0.85);background:rgba(240,168,90,0.15);border-radius:8.7px"></div><div class="e" style="left:8px;right:8px;top:1542.3px;height:18.7px;border-color:rgba(240,168,90,0.85);background:rgba(240,168,90,0.15);border-radius:9.4px"></div><div class="e" style="left:8px;right:8px;top:1542.3px;height:18.7px;border-color:rgba(240,168,90,0.85);background:rgba(240,168,90,0.15);border-radius:9.4px"></div></div>
<div class="col" style="left:2198.5px"><div class="hl" style="top:71.2px"></div><div class="hl" style="top:144.6px"></div><div class="hl" style="top:218.1px"></div><div class="hl" style="top:291.5px"></div><div class="hl" style="top:364.9px"></div><div class="hl" style="top:438.4px"></div><div class="hl" style="top:511.9px"></div><div class="hl" style="top:585.3px"></div><div class="hl" style="top:658.8px"></div><div class="hl" style="top:732.2px"></div><div class="hl" style="top:805.7px"></div><div class="hl" style="top:879.1px"></div><div class="hl" style="top:952.5px"></div><div class="hl" style="top:1026px"></div><div class="hl" style="top:1099.5px"></div><div class="hl" style="top:1172.9px"></div><div class="hl" style="top:1246.4px"></div><div class="hl" style="top:1319.8px"></div><div class="hl" style="top:1393.2px"></div><div class="hl" style="top:1466.7px"></div><div class="hl" style="top:1540.2px"></div><div class="hl" style="top:1613.6px"></div><div class="hl" style="top:1687.1px"></div><div class="e" style="left:8px;right:8px;top:132.8px;height:14.2px;border-color:rgba(240,168,90,0.85);background:rgba(240,168,90,0.15);border-radius:7.1px"></div><div class="e" style="left:8px;right:8px;top:139px;height:15px;border-color:rgba(240,168,90,0.85);background:rgba(240,168,90,0.15);border-radius:7.5px"></div><div class="e" style="left:8px;right:8px;top:145px;height:26.6px;border-color:rgba(240,168,90,0.95);background:rgba(240,168,90,0.95);border-radius:12px"></div><div class="e" style="left:8px;right:8px;top:168.5px;height:13.7px;border-color:rgba(240,168,90,0.85);background:rgba(240,168,90,0.15);border-radius:6.8px"></div><div class="e" style="left:8px;right:8px;top:188.9px;height:16.3px;border-color:rgba(240,168,90,0.85);background:rgba(240,168,90,0.15);border-radius:8.2px"></div><div class="e" style="left:8px;right:8px;top:755.9px;height:15.9px;border-color:rgba(240,168,90,0.85);background:rgba(240,168,90,0.15);border-radius:7.9px"></div><div class="e" style="left:8px;right:8px;top:767.3px;height:15.7px;border-color:rgba(143,218,181,0.85);background:rgba(143,218,181,0.15);border-radius:7.9px"></div><div class="e" style="left:8px;right:8px;top:791.2px;height:15.9px;border-color:rgba(240,168,90,0.85);background:rgba(240,168,90,0.15);border-radius:7.9px"></div><div class="e" style="left:8px;right:8px;top:791.2px;height:15.9px;border-color:rgba(143,218,181,0.85);background:rgba(143,218,181,0.15);border-radius:7.9px"></div><div class="e" style="left:8px;right:8px;top:808.1px;height:15.7px;border-color:rgba(240,168,90,0.85);background:rgba(240,168,90,0.15);border-radius:7.8px"></div><div class="e" style="left:8px;right:8px;top:946.1px;height:15.7px;border-color:rgba(240,168,90,0.85);background:rgba(240,168,90,0.15);border-radius:7.9px"></div><div class="e" style="left:8px;right:8px;top:968.1px;height:16.7px;border-color:rgba(240,168,90,0.85);background:rgba(240,168,90,0.15);border-radius:8.4px"></div><div class="e" style="left:8px;right:8px;top:968.1px;height:16.7px;border-color:rgba(240,168,90,0.85);background:rgba(240,168,90,0.15);border-radius:8.4px"></div><div class="e" style="left:8px;right:8px;top:1036px;height:48.9px;border-color:rgba(240,168,90,0.85);background:rgba(240,168,90,0.15);border-radius:12px"></div><div class="e" style="left:8px;right:8px;top:1036px;height:16.2px;border-color:rgba(240,168,90,0.85);background:rgba(240,168,90,0.15);border-radius:8.1px"></div><div class="e" style="left:8px;right:8px;top:1086.3px;height:13.2px;border-color:rgba(240,168,90,0.85);background:rgba(240,168,90,0.15);border-radius:6.6px"></div><div class="e" style="left:8px;right:8px;top:1086.3px;height:13.2px;border-color:rgba(240,168,90,0.85);background:rgba(240,168,90,0.15);border-radius:6.6px"></div><div class="e" style="left:8px;right:8px;top:1095.5px;height:23.5px;border-color:rgba(240,168,90,0.95);background:rgba(240,168,90,0.95);border-radius:11.8px"></div><div class="e" style="left:8px;right:8px;top:1115.8px;height:15.2px;border-color:rgba(240,168,90,0.85);background:rgba(240,168,90,0.15);border-radius:7.6px"></div><div class="e" style="left:8px;right:8px;top:1115.8px;height:15.2px;border-color:rgba(240,168,90,0.85);background:rgba(240,168,90,0.15);border-radius:7.6px"></div><div class="e" style="left:8px;right:8px;top:1128px;height:15.4px;border-color:rgba(240,168,90,0.95);background:rgba(240,168,90,0.95);border-radius:7.7px"></div><div class="e" style="left:8px;right:8px;top:1140.3px;height:18.3px;border-color:rgba(240,168,90,0.95);background:rgba(240,168,90,0.95);border-radius:9.1px"></div><div class="e" style="left:8px;right:8px;top:1156.6px;height:8.4px;border-color:rgba(240,168,90,0.95);background:rgba(240,168,90,0.95);border-radius:4.2px"></div><div class="e" style="left:8px;right:8px;top:1160.7px;height:12.3px;border-color:rgba(240,168,90,0.85);background:rgba(240,168,90,0.15);border-radius:6.1px"></div><div class="e" style="left:8px;right:8px;top:1160.7px;height:12.3px;border-color:rgba(240,168,90,0.85);background:rgba(240,168,90,0.15);border-radius:6.1px"></div><div class="e" style="left:8px;right:8px;top:1165.8px;height:22.4px;border-color:rgba(240,168,90,0.85);background:rgba(240,168,90,0.15);border-radius:11.2px"></div><div class="e" style="left:8px;right:8px;top:1189.2px;height:20.8px;border-color:rgba(240,168,90,0.95);background:rgba(240,168,90,0.95);border-radius:10.4px"></div><div class="e" style="left:8px;right:8px;top:1216.1px;height:15.9px;border-color:rgba(240,168,90,0.85);background:rgba(240,168,90,0.15);border-radius:8px"></div><div class="e" style="left:8px;right:8px;top:1237.1px;height:15.3px;border-color:rgba(240,168,90,0.85);background:rgba(240,168,90,0.15);border-radius:7.7px"></div><div class="e" style="left:8px;right:8px;top:1246px;height:10px;border-color:rgba(240,168,90,0.85);background:rgba(240,168,90,0.15);border-radius:5px"></div><div class="e" style="left:8px;right:8px;top:1249.4px;height:19.7px;border-color:rgba(240,168,90,0.85);background:rgba(240,168,90,0.15);border-radius:9.8px"></div></div>
<div class="col today" style="left:2438px"><div class="hl" style="top:71.2px"></div><div class="hl" style="top:144.6px"></div><div class="hl" style="top:218.1px"></div><div class="hl" style="top:291.5px"></div><div class="hl" style="top:364.9px"></div><div class="hl" style="top:438.4px"></div><div class="hl" style="top:511.9px"></div><div class="hl" style="top:585.3px"></div><div class="hl" style="top:658.8px"></div><div class="hl" style="top:732.2px"></div><div class="hl" style="top:805.7px"></div><div class="hl" style="top:879.1px"></div><div class="hl" style="top:952.5px"></div><div class="hl" style="top:1026px"></div><div class="hl" style="top:1099.5px"></div><div class="hl" style="top:1172.9px"></div><div class="hl" style="top:1246.4px"></div><div class="hl" style="top:1319.8px"></div><div class="hl" style="top:1393.2px"></div><div class="hl" style="top:1466.7px"></div><div class="hl" style="top:1540.2px"></div><div class="hl" style="top:1613.6px"></div><div class="hl" style="top:1687.1px"></div><div class="e" style="left:8px;right:8px;top:440px;height:49.1px;border-color:rgba(240,168,90,0.85);background:rgba(240,168,90,0.15);border-radius:12px"></div><div class="e" style="left:8px;right:8px;top:533px;height:16px;border-color:rgba(240,168,90,0.85);background:rgba(240,168,90,0.15);border-radius:8px"></div><div class="e" style="left:8px;right:8px;top:615.9px;height:507.1px;border-color:rgba(240,168,90,0.85);background:rgba(240,168,90,0.15);border-radius:12px"></div><div class="e" style="left:8px;right:8px;top:1124px;height:16.3px;border-color:rgba(240,168,90,0.85);background:rgba(240,168,90,0.15);border-radius:8.1px"></div><div class="e" style="left:8px;right:8px;top:1124px;height:16.3px;border-color:rgba(240,168,90,0.85);background:rgba(240,168,90,0.15);border-radius:8.1px"></div><div class="e" style="left:8px;right:8px;top:1348.8px;height:143.7px;border-color:rgba(240,168,90,0.85);background:rgba(240,168,90,0.15);border-radius:12px"></div><div class="e" style="left:8px;right:8px;top:1348.8px;height:16.2px;border-color:rgba(240,168,90,0.85);background:rgba(240,168,90,0.15);border-radius:8.1px"></div></div>
<div class="col" style="left:2677.5px"><div class="hl" style="top:71.2px"></div><div class="hl" style="top:144.6px"></div><div class="hl" style="top:218.1px"></div><div class="hl" style="top:291.5px"></div><div class="hl" style="top:364.9px"></div><div class="hl" style="top:438.4px"></div><div class="hl" style="top:511.9px"></div><div class="hl" style="top:585.3px"></div><div class="hl" style="top:658.8px"></div><div class="hl" style="top:732.2px"></div><div class="hl" style="top:805.7px"></div><div class="hl" style="top:879.1px"></div><div class="hl" style="top:952.5px"></div><div class="hl" style="top:1026px"></div><div class="hl" style="top:1099.5px"></div><div class="hl" style="top:1172.9px"></div><div class="hl" style="top:1246.4px"></div><div class="hl" style="top:1319.8px"></div><div class="hl" style="top:1393.2px"></div><div class="hl" style="top:1466.7px"></div><div class="hl" style="top:1540.2px"></div><div class="hl" style="top:1613.6px"></div><div class="hl" style="top:1687.1px"></div></div>
<div class="col" style="left:2917px"><div class="hl" style="top:71.2px"></div><div class="hl" style="top:144.6px"></div><div class="hl" style="top:218.1px"></div><div class="hl" style="top:291.5px"></div><div class="hl" style="top:364.9px"></div><div class="hl" style="top:438.4px"></div><div class="hl" style="top:511.9px"></div><div class="hl" style="top:585.3px"></div><div class="hl" style="top:658.8px"></div><div class="hl" style="top:732.2px"></div><div class="hl" style="top:805.7px"></div><div class="hl" style="top:879.1px"></div><div class="hl" style="top:952.5px"></div><div class="hl" style="top:1026px"></div><div class="hl" style="top:1099.5px"></div><div class="hl" style="top:1172.9px"></div><div class="hl" style="top:1246.4px"></div><div class="hl" style="top:1319.8px"></div><div class="hl" style="top:1393.2px"></div><div class="hl" style="top:1466.7px"></div><div class="hl" style="top:1540.2px"></div><div class="hl" style="top:1613.6px"></div><div class="hl" style="top:1687.1px"></div></div>
<div class="b" style="left:2440px;top:1604px;width:228px;height:4px;background:#6ad0a0"></div>
<div class="b" style="left:2432px;top:1596px;width:16px;height:16px;background:#6ad0a0;border-radius:50%"></div>
<svg class="jp" style="left:3195px;top:108px" width="36" height="36" viewBox="0 0 36 36"><path d="M6 6 L30 30 M30 6 L6 30" stroke="#b4b4b4" stroke-width="4" stroke-linecap="round" fill="none"/></svg>
</div></div>
<div id="frame"></div>
</body></html>
